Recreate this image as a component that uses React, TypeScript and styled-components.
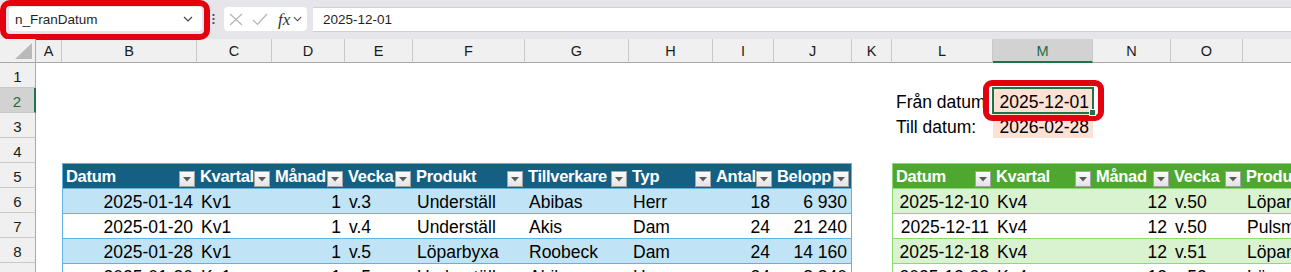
import React from "react";
import styled, {createGlobalStyle} from "styled-components";

const GlobalStyle = createGlobalStyle`
	html, body {
		margin: 0;
		padding: 0;
		background: #ffffff;
		overflow: hidden;
	}
	body {
		font-family: "Liberation Sans", Arial, sans-serif;
		color: #000;
	}
`;

const COLS = ["A", "B", "C", "D", "E", "F", "G", "H", "I", "J", "K", "L", "M", "N", "O", "P"];
const WIDTHS = [26, 135, 75, 73, 68, 112, 104, 84, 61, 78, 40, 101, 100, 78, 72, 120];
const ROWS = [1, 2, 3, 4, 5, 6, 7, 8, 9];

type Theme = {head: string; band: string; line: string};

type Table = {
	first: number;
	head: string[];
	right: boolean[];
	rows: string[][];
	theme: Theme;
	closed: boolean;
};

const blueTable: Table = {
	first: 1,
	head: ["Datum", "Kvartal", "Månad", "Vecka", "Produkt", "Tillverkare", "Typ", "Antal", "Belopp"],
	right: [true, false, true, false, false, false, false, true, true],
	rows: [
		["2025-01-14", "Kv1", "1", "v.3", "Underställ", "Abibas", "Herr", "18", "6 930"],
		["2025-01-20", "Kv1", "1", "v.4", "Underställ", "Akis", "Dam", "24", "21 240"],
		["2025-01-28", "Kv1", "1", "v.5", "Löparbyxa", "Roobeck", "Dam", "24", "14 160"],
		["2025-01-30", "Kv1", "1", "v.5", "Underställ", "Abibas", "Herr", "24", "8 840"],
	],
	theme: {head: "#156082", band: "#c0e4f5", line: "#5fb4e2"},
	closed: true,
};

const greenTable: Table = {
	first: 11,
	head: ["Datum", "Kvartal", "Månad", "Vecka", "Produkt"],
	right: [true, false, true, false, false],
	rows: [
		["2025-12-10", "Kv4", "12", "v.50", "Löparbyxa"],
		["2025-12-11", "Kv4", "12", "v.50", "Pulsmätare"],
		["2025-12-18", "Kv4", "12", "v.51", "Löparbyxa"],
		["2025-12-22", "Kv4", "12", "v.52", "Löparjacka"],
	],
	theme: {head: "#4ea72e", band: "#d9f2d0", line: "#8ed973"},
	closed: false,
};

const TABLES = [blueTable, greenTable];

const Chevron = ({w = 10}: {w?: number}) => (
	<svg width={w} height={6} viewBox="0 0 10 6">
		<polyline points="1,1 5,5 9,1" fill="none" stroke="#444" strokeWidth="1.2" />
	</svg>
);

const FilterArrow = () => (
	<svg width={8} height={5} viewBox="0 0 8 5">
		<polygon points="0,0 8,0 4,4.5" fill="#5a5a5a" />
	</svg>
);

export default function App() {
	const renderCell = (r: number, c: number) => {
		const key = `${COLS[c]}${r}`;

		for (const t of TABLES) {
			const idx = c - t.first;
			if (idx < 0 || idx >= t.head.length || r < 5) continue;
			const isFirst = idx === 0;
			const isLast = t.closed && idx === t.head.length - 1;

			if (r === 5) {
				return (
					<HeadCell key={key} $bg={t.theme.head} $line={t.theme.line} $first={isFirst} $last={isLast}>
						<HeadLabel>{t.head[idx]}</HeadLabel>
						<FilterButton>
							<FilterArrow />
						</FilterButton>
					</HeadCell>
				);
			}

			const di = r - 6;
			return (
				<Cell
					key={key}
					$bg={di % 2 === 0 ? t.theme.band : "#ffffff"}
					$align={t.right[idx] ? "right" : "left"}
					$line={t.theme.line}
					$first={isFirst}
					$last={isLast}
				>
					{t.rows[di][idx]}
				</Cell>
			);
		}

		if (key === "L2") return <Cell key={key}>Från datum</Cell>;
		if (key === "L3") return <Cell key={key}>Till datum:</Cell>;
		if (key === "M2")
			return (
				<SelectedCell key={key} $bg="#fbe2d5" $align="right">
					2025-12-01
					<CellMark />
				</SelectedCell>
			);
		if (key === "M3")
			return (
				<Cell key={key} $bg="#fbe2d5" $align="right">
					2026-02-28
				</Cell>
			);

		return <Cell key={key} />;
	};

	return (
		<>
			<GlobalStyle />
			<Window>
				<FormulaBar>
					<NameBox>
						<span>n_FranDatum</span>
						<Chevron />
						<NameMark />
					</NameBox>
					<Grip>
						<svg width={3} height={12} viewBox="0 0 3 12">
							<rect x="0.5" y="1" width="2" height="2" fill="#555" />
							<rect x="0.5" y="5" width="2" height="2" fill="#555" />
							<rect x="0.5" y="9" width="2" height="2" fill="#555" />
						</svg>
					</Grip>
					<FxGroup>
						<svg width={14} height={13} viewBox="0 0 14 13">
							<path d="M1 1 L13 12 M13 1 L1 12" stroke="#b4b4b4" strokeWidth="1.2" fill="none" />
						</svg>
						<svg width={16} height={13} viewBox="0 0 16 13">
							<polyline points="1,7 5.5,11.5 15,1" stroke="#b4b4b4" strokeWidth="1.2" fill="none" />
						</svg>
						<FxText>fx</FxText>
						<SmallChevron>
							<Chevron w={9} />
						</SmallChevron>
					</FxGroup>
					<FormulaInput>2025-12-01</FormulaInput>
				</FormulaBar>

				<Sheet>
					<Corner />
					{COLS.map((col) => (
						<ColHeader key={col} $active={col === "M"}>
							{col}
						</ColHeader>
					))}
					{ROWS.map((r) => (
						<React.Fragment key={r}>
							<RowHeader $active={r === 2}>{r}</RowHeader>
							{COLS.map((_, c) => renderCell(r, c))}
						</React.Fragment>
					))}
				</Sheet>
			</Window>
		</>
	);
}

const Window = styled.div`
	width: 1291px;
	height: 272px;
	overflow: hidden;
	display: flex;
	flex-direction: column;
`;

const FormulaBar = styled.div`
	height: 39px;
	flex: none;
	box-sizing: border-box;
	padding: 7px 0 0 9px;
	background: #e6e6ea;
	display: flex;
	align-items: flex-start;
	font-size: 13.5px;
	color: #1f1f1f;
`;

const NameBox = styled.div`
	position: relative;
	box-sizing: border-box;
	width: 193px;
	height: 24px;
	background: #ffffff;
	border-radius: 4px;
	display: flex;
	align-items: center;
	justify-content: space-between;
	padding: 0 9px 0 6px;
`;

const NameMark = styled.div`
	position: absolute;
	top: -7px;
	left: -9px;
	right: -8px;
	bottom: -9px;
	border: 6px solid #e3000f;
	border-radius: 10px;
	pointer-events: none;
`;

const Grip = styled.div`
	width: 22px;
	height: 24px;
	display: flex;
	align-items: center;
	justify-content: center;
`;

const FxGroup = styled.div`
	box-sizing: border-box;
	width: 83px;
	height: 24px;
	background: #ffffff;
	border-radius: 4px;
	display: flex;
	align-items: center;
	gap: 9px;
	padding-left: 5px;
`;

const FxText = styled.span`
	font-family: "Liberation Serif", "Times New Roman", serif;
	font-style: italic;
	font-size: 17px;
	color: #333;
	margin-left: 1px;
	line-height: 1;
`;

const SmallChevron = styled.span`
	display: flex;
	margin-left: -6px;
`;

const FormulaInput = styled.div`
	flex: 1;
	box-sizing: border-box;
	height: 25px;
	margin-left: 6px;
	background: #ffffff;
	border-top: 1px solid #d0d0d4;
	border-bottom: 1px solid #d0d0d4;
	display: flex;
	align-items: center;
	padding-left: 10px;
`;

const Sheet = styled.div`
	display: grid;
	grid-template-columns: 36px ${WIDTHS.map((w) => `${w}px`).join(" ")};
	grid-template-rows: 24px;
	grid-auto-rows: 25px;
	background: #ffffff;
`;

const Corner = styled.div`
	position: relative;
	background: #f0f0f0;
	border-right: 1px solid #a8a8a8;
	border-bottom: 1px solid #a8a8a8;
	box-sizing: border-box;

	&::after {
		content: "";
		position: absolute;
		right: 3px;
		bottom: 3px;
		width: 17px;
		height: 16px;
		background: #b9b9b9;
		clip-path: polygon(100% 0, 100% 100%, 0 100%);
	}
`;

const ColHeader = styled.div<{$active?: boolean}>`
	box-sizing: border-box;
	display: flex;
	align-items: center;
	justify-content: center;
	font-size: 14.5px;
	background: ${(p) => (p.$active ? "#d2d2d2" : "#f0f0f0")};
	color: ${(p) => (p.$active ? "#1e6b41" : "#1a1a1a")};
	border-right: 1px solid #c8c8c8;
	border-bottom: ${(p) => (p.$active ? "2px solid #217346" : "1px solid #a8a8a8")};
	padding-top: ${(p) => (p.$active ? "1px" : "0")};
`;

const RowHeader = styled.div<{$active?: boolean}>`
	box-sizing: border-box;
	display: flex;
	align-items: center;
	justify-content: center;
	padding-top: 3px;
	font-size: 15px;
	background: ${(p) => (p.$active ? "#d2d2d2" : "#f0f0f0")};
	color: ${(p) => (p.$active ? "#1e6b41" : "#1a1a1a")};
	border-bottom: 1px solid #c8c8c8;
	border-right: ${(p) => (p.$active ? "2px solid #217346" : "1px solid #a8a8a8")};
`;

type CellProps = {
	$bg?: string;
	$align?: "left" | "right";
	$line?: string;
	$first?: boolean;
	$last?: boolean;
};

const Cell = styled.div<CellProps>`
	box-sizing: border-box;
	display: flex;
	align-items: flex-end;
	justify-content: ${(p) => (p.$align === "right" ? "flex-end" : "flex-start")};
	padding: 0 4px 0 4px;
	background: ${(p) => p.$bg ?? "#ffffff"};
	font-size: 17.5px;
	line-height: 22px;
	white-space: nowrap;
	overflow: hidden;
	border-top: ${(p) => (p.$line ? `1px solid ${p.$line}` : "none")};
	border-left: ${(p) => (p.$line && p.$first ? `1px solid ${p.$line}` : "none")};
	border-right: ${(p) => (p.$line && p.$last ? `1px solid ${p.$line}` : "none")};
`;

const SelectedCell = styled(Cell)`
	position: relative;
	overflow: visible;
	z-index: 2;

	&::before {
		content: "";
		position: absolute;
		inset: -1px -1px -1px -1px;
		border: 2px solid #217346;
	}

	&::after {
		content: "";
		position: absolute;
		right: -3px;
		bottom: -3px;
		width: 5px;
		height: 5px;
		background: #217346;
		border: 1px solid #ffffff;
	}
`;

const CellMark = styled.div`
	position: absolute;
	top: -8px;
	left: -10px;
	right: -11px;
	bottom: -8px;
	border: 6px solid #e3000f;
	border-radius: 9px;
	pointer-events: none;
`;

const HeadCell = styled(Cell)`
	justify-content: space-between;
	color: #ffffff;
	font-weight: 700;
	font-size: 16.5px;
	letter-spacing: -0.3px;
	padding: 0 2px 1px 3px;
	line-height: 21px;
`;

const HeadLabel = styled.span`
	flex: 1;
	min-width: 0;
	overflow: visible;
`;

const FilterButton = styled.span`
	position: relative;
	z-index: 1;
	flex: none;
	box-sizing: border-box;
	width: 16px;
	height: 16px;
	display: flex;
	align-items: center;
	justify-content: center;
	background: linear-gradient(#fbfbfb, #e4e4e4);
	border: 1px solid #a4a4a4;
`;
